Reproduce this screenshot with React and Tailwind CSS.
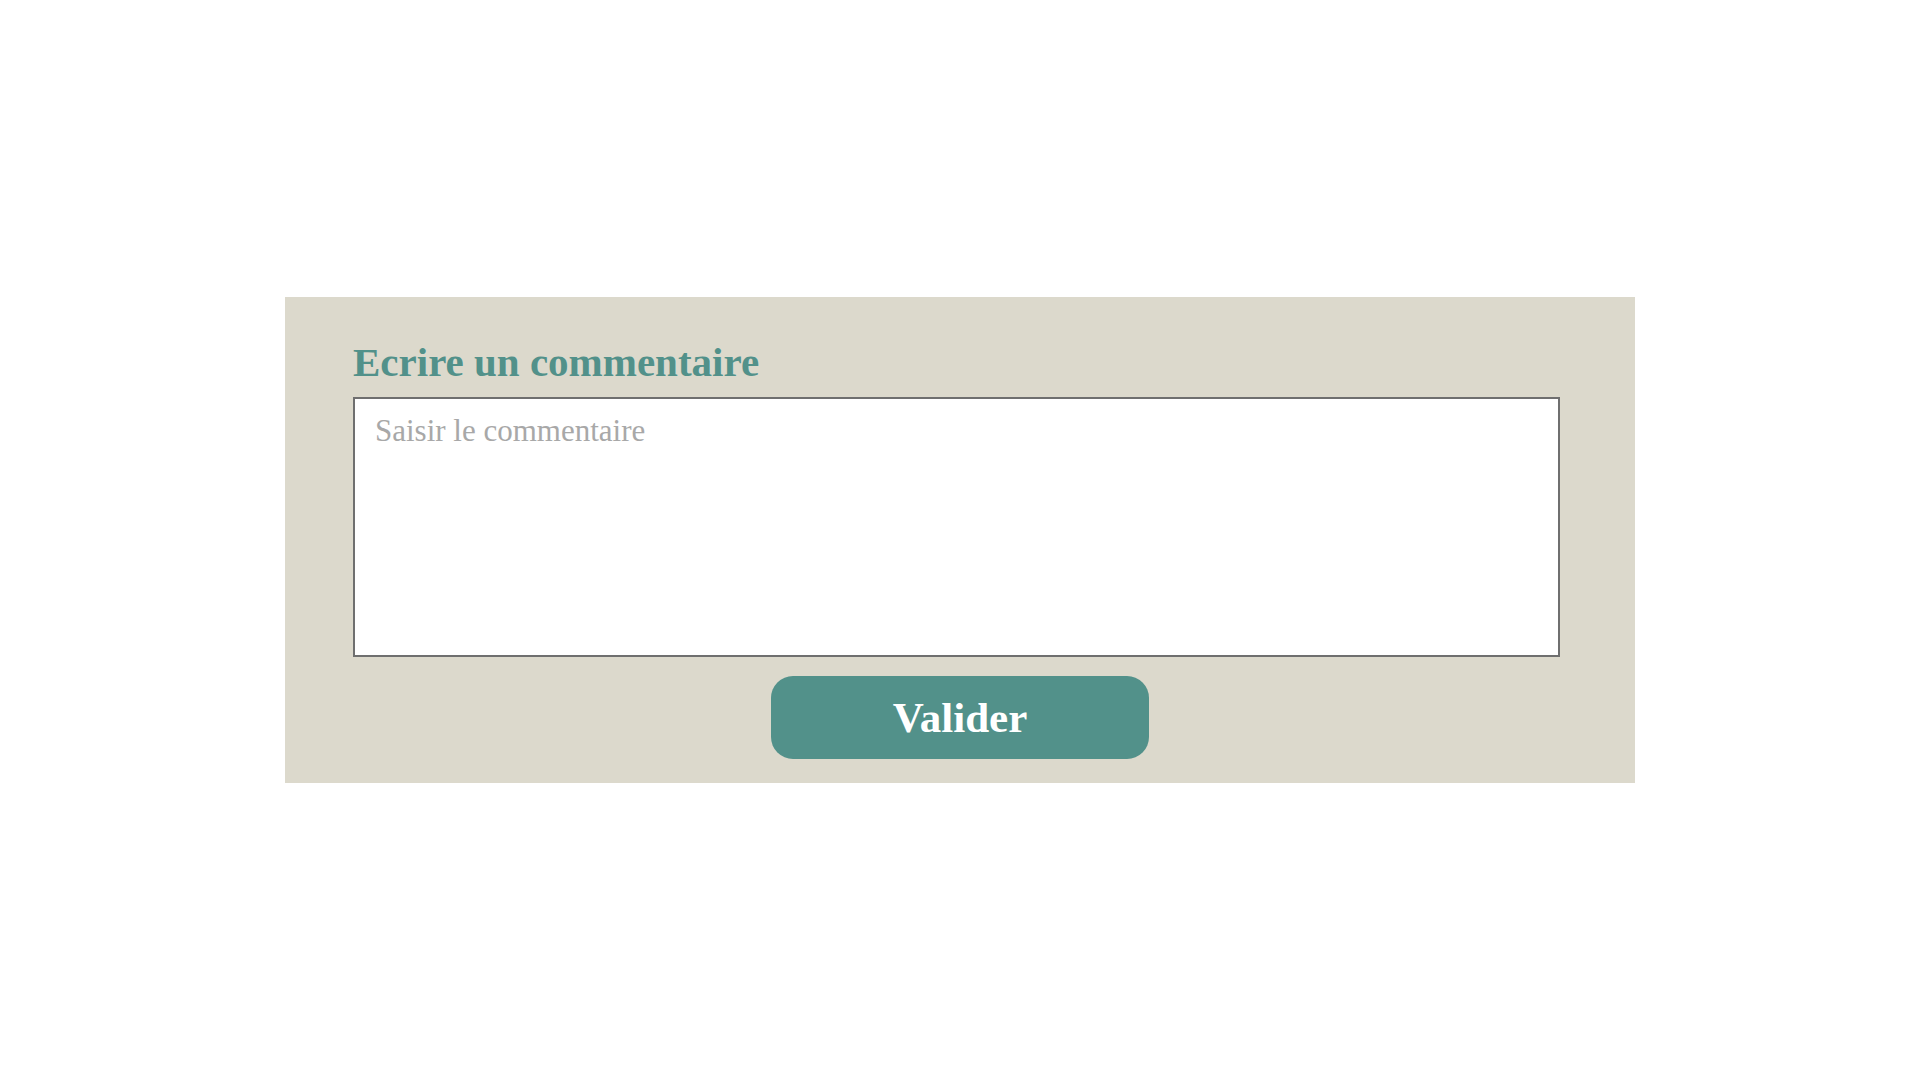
export default function App() {
  return (
    <div className="min-h-screen w-full bg-white flex items-center justify-center font-['Liberation_Serif',serif]">
      <div className="w-[1350px] h-[486px] bg-[#dcd9cc] pt-[41px] flex flex-col">
        <h2 className="ml-[68px] text-[41px] leading-[48px] font-bold text-[#52918a] mb-[11px]">
          Ecrire un commentaire
        </h2>
        <textarea
          placeholder="Saisir le commentaire"
          className="ml-[68px] w-[1207px] h-[260px] border-2 border-[#6f6f6f] bg-white pt-[14px] px-[20px] text-[31px] leading-[36px] text-[#333] placeholder:text-[#a8a8a8] resize-none outline-none"
        />
        <button className="self-center mt-[19px] w-[378px] h-[83px] rounded-[22px] bg-[#52918a] text-white text-[43px] leading-[43px] font-bold flex items-center justify-center">
          Valider
        </button>
      </div>
    </div>
  );
}
